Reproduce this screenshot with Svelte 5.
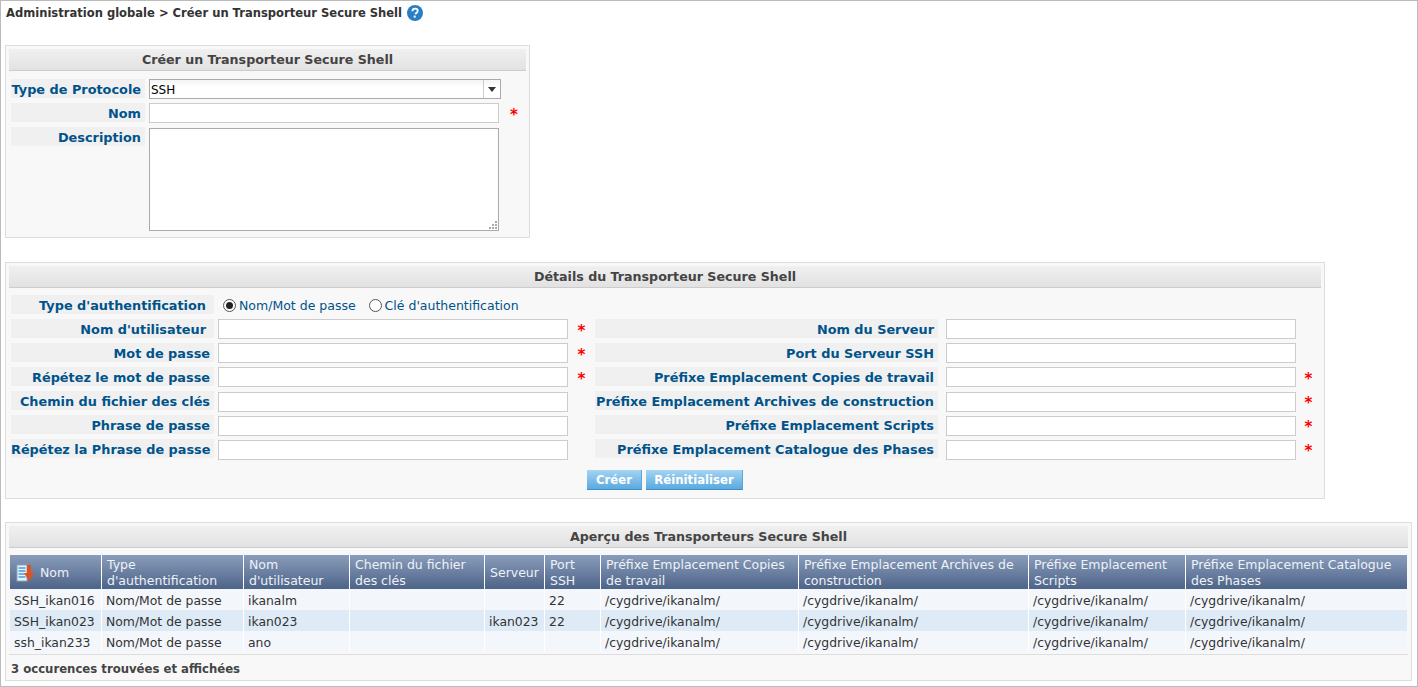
<script lang="ts">
	const left_rows = [
		{ label: "Nom d'utilisateur", required: true },
		{ label: 'Mot de passe', required: true },
		{ label: 'Répétez le mot de passe', required: true },
		{ label: 'Chemin du fichier des clés', required: false },
		{ label: 'Phrase de passe', required: false },
		{ label: 'Répétez la Phrase de passe', required: false },
	];
	const right_rows = [
		{ label: 'Nom du Serveur', required: false },
		{ label: 'Port du Serveur SSH', required: false },
		{ label: 'Préfixe Emplacement Copies de travail', required: true },
		{ label: 'Préfixe Emplacement Archives de construction', required: true },
		{ label: 'Préfixe Emplacement Scripts', required: true },
		{ label: 'Préfixe Emplacement Catalogue des Phases', required: true },
	];
	const columns = [
		{ title: 'Nom', width: 92 },
		{ title: "Type d'authentification", width: 142 },
		{ title: "Nom d'utilisateur", width: 106 },
		{ title: 'Chemin du fichier des clés', width: 135 },
		{ title: 'Serveur', width: 60 },
		{ title: 'Port SSH', width: 56 },
		{ title: 'Préfixe Emplacement Copies de travail', width: 198 },
		{ title: 'Préfixe Emplacement Archives de construction', width: 230 },
		{ title: 'Préfixe Emplacement Scripts', width: 157 },
		{ title: 'Préfixe Emplacement Catalogue des Phases', width: 221 },
	];
	const path = '/cygdrive/ikanalm/';
	const rows = [
		['SSH_ikan016', 'Nom/Mot de passe', 'ikanalm', '', '', '22', path, path, path, path],
		['SSH_ikan023', 'Nom/Mot de passe', 'ikan023', '', 'ikan023', '22', path, path, path, path],
		['ssh_ikan233', 'Nom/Mot de passe', 'ano', '', '', '', path, path, path, path],
	];
</script>

<div class="page">
	<div class="crumb">
		<span>Administration globale &gt; Créer un Transporteur Secure Shell</span>
		<svg class="help" viewBox="0 0 16 16" width="16" height="16">
			<circle cx="8" cy="8" r="8" fill="#2a7fc4" />
			<path d="M5.4 6.2C5.5 4.600 6.600 3.600 8.100 3.600c1.500 0 2.600.9 2.600 2.200 0 1-.5 1.500-1.300 2.100-.6.4-.8.7-.8 1.400" fill="none" stroke="#fff" stroke-width="1.9" />
			<rect x="6.700" y="10.600" width="2" height="2" fill="#fff" />
		</svg>
	</div>

	<section class="panel first">
		<h2>Créer un Transporteur Secure Shell</h2>
		<div class="form-small">
			<div class="label">Type de Protocole</div>
			<div class="select"><span>SSH</span><i><b></b></i></div>
			<div></div>
			<div class="label">Nom</div>
			<div class="input"></div>
			<div class="star">*</div>
			<div class="label">Description</div>
			<div class="textarea">
				<svg class="grip" viewBox="0 0 9 9" width="9" height="9">
					<path d="M7 1h2v2H7zM4 4h2v2H4zM7 4h2v2H7zM1 7h2v2H1zM4 7h2v2H4zM7 7h2v2H7z" fill="#a9a9a9" />
				</svg>
			</div>
			<div></div>
		</div>
	</section>

	<section class="panel second">
		<h2>Détails du Transporteur Secure Shell</h2>
		<div class="auth-row">
			<div class="label">Type d'authentification</div>
			<label class="radio"><span class="dot on"></span>Nom/Mot de passe</label>
			<label class="radio"><span class="dot"></span>Clé d'authentification</label>
		</div>
		<div class="form-big">
			{#each left_rows as row, i}
				<div class="label" class:indent={i === 0}>{row.label}</div>
				<div class="input left" class:low={i > 2}></div>
				<div class="star">{row.required ? '*' : ''}</div>
				<div class="label">{right_rows[i].label}</div>
				<div class="input right" class:low={i > 2}></div>
				<div class="star">{right_rows[i].required ? '*' : ''}</div>
			{/each}
		</div>
		<div class="buttons">
			<button type="button" class="create">Créer</button>
			<button type="button" class="reset">Réinitialiser</button>
		</div>
	</section>

	<section class="panel third">
		<h2>Aperçu des Transporteurs Secure Shell</h2>
		<table>
			<colgroup>
				{#each columns as col}
					<col style="width: {col.width}px" />
				{/each}
			</colgroup>
			<thead>
				<tr>
					{#each columns as col, i}
						<th>
							{#if i === 0}
								<svg class="sort" viewBox="0 0 18 18" width="18" height="18">
									<rect x="1" y="1" width="10" height="16" fill="#eaf3fb" stroke="#8aa3bd" />
									<path d="M2.500 4h7M2.500 7h7M2.500 10h7M2.500 13h7" stroke="#4a9be0" stroke-width="1.300" />
									<path d="M11 1h4v8h3l-5 8-5-8h3z" fill="#e0521b" />
								</svg>
								<span class="first-title">{col.title}</span>
							{:else}
								{col.title}
							{/if}
						</th>
					{/each}
				</tr>
			</thead>
			<tbody>
				{#each rows as row, r}
					<tr class:even={r === 1}>
						{#each row as cell}
							<td>{cell}</td>
						{/each}
					</tr>
				{/each}
			</tbody>
		</table>
		<div class="count">3 occurences trouvées et affichées</div>
	</section>
</div>

<style>
	:global(body) {
		margin: 0;
		background: #fff;
	}
	.page {
		box-sizing: border-box;
		width: 1418px;
		height: 687px;
		border: 1px solid #bbb;
		padding: 4px 4px 0;
		font-family: 'DejaVu Sans', Verdana, sans-serif;
		font-size: 12px;
		color: #333;
		overflow: hidden;
	}
	.crumb {
		display: flex;
		align-items: center;
		gap: 5px;
		height: 16px;
		padding-left: 1px;
		font-size: 11.55px;
		font-weight: bold;
		color: #333;
	}
	.help {
		display: block;
	}
	.panel {
		box-sizing: border-box;
		background: #f8f8f8;
		border: 1px solid #ddd;
		padding: 3px;
	}
	.first {
		width: 525px;
		height: 193px;
		margin-top: 24px;
	}
	.second {
		width: 1320px;
		height: 237px;
		margin-top: 24px;
	}
	.third {
		width: 1407px;
		height: 159px;
		margin-top: 23px;
	}
	h2 {
		margin: 0;
		height: 22px;
		line-height: 21px;
		font-size: 12.65px;
		font-weight: bold;
		text-align: center;
		color: #444;
		background: linear-gradient(#f0f0f0, #e2e2e2);
		border-bottom: 1px solid #ccc;
		box-sizing: border-box;
	}
	.label {
		box-sizing: border-box;
		height: 19px;
		line-height: 21px;
		padding-right: 4px;
		background: #f0f0f0;
		color: #00538a;
		font-weight: bold;
		font-size: 12.85px;
		text-align: right;
		white-space: nowrap;
	}
	.input {
		box-sizing: border-box;
		height: 20px;
		width: 350px;
		background: #fff;
		border: 1px solid #ccc;
	}
	.star {
		height: 20px;
		color: #f00;
		font-weight: bold;
		font-size: 15px;
		line-height: 24px;
		text-align: center;
	}
	.form-small {
		display: grid;
		grid-template-columns: 134px 352px 18px;
		column-gap: 4px;
		row-gap: 4px;
		padding: 8px 0 0 2px;
		align-items: start;
	}
	.select {
		box-sizing: border-box;
		display: flex;
		justify-content: space-between;
		height: 20px;
		width: 352px;
		background: linear-gradient(#f4f4f4, #fff 40%);
		border: 1px solid #a9a9b0;
		color: #000;
		font-size: 12px;
		line-height: 20px;
		padding-left: 1px;
	}
	.select i {
		display: flex;
		align-items: center;
		justify-content: center;
		width: 16px;
		border-left: 1px solid #ccc;
	}
	.select b {
		border: 4px solid transparent;
		border-top: 5px solid #333;
		border-bottom: 0;
	}
	.textarea {
		box-sizing: border-box;
		position: relative;
		width: 350px;
		height: 103px;
		margin-top: 1px;
		background: #fff;
		border: 1px solid #a9a9b0;
	}
	.grip {
		position: absolute;
		right: 1px;
		bottom: 1px;
	}
	.auth-row {
		display: flex;
		align-items: flex-start;
		padding: 7px 0 0 2px;
		height: 19px;
	}
	.auth-row .label {
		width: 203px;
		padding-right: 8px;
		margin-right: 9px;
	}
	.radio {
		display: flex;
		align-items: center;
		gap: 3px;
		height: 21px;
		margin-right: 13px;
		color: #00538a;
		font-size: 12.5px;
	}
	.dot {
		box-sizing: border-box;
		width: 13px;
		height: 13px;
		border-radius: 50%;
		border: 1px solid #555;
		background: #fff;
		display: flex;
		align-items: center;
		justify-content: center;
	}
	.dot.on::after {
		content: '';
		width: 7px;
		height: 7px;
		border-radius: 50%;
		background: #222;
	}
	.form-big {
		display: grid;
		grid-template-columns: 203px 354px 27px 343px 358px 25px;
		grid-auto-rows: 20px;
		row-gap: 4px;
		padding: 5px 0 0 2px;
		align-items: start;
	}
	.input.left {
		margin-left: 4px;
	}
	.input.right {
		margin-left: 8px;
	}
	.input.low {
		margin-top: 1px;
	}
	.indent {
		padding-right: 8px;
	}
	.buttons {
		display: flex;
		justify-content: center;
		gap: 4px;
		margin-top: 11px;
	}
	button {
		box-sizing: border-box;
		height: 20px;
		padding: 0;
		border: 0;
		border-bottom: 1px solid #3a8fc8;
		border-right: 1px solid #5aa5d8;
		background: linear-gradient(#a5d3f2, #5aaadf);
		color: #fff;
		font-family: inherit;
		font-size: 11.7px;
		font-weight: bold;
		line-height: 18px;
	}
	.create {
		width: 55px;
	}
	.reset {
		width: 97px;
	}
	table {
		width: 1397px;
		margin: 7px 0 0 1px;
		border-collapse: separate;
		border-spacing: 0;
		table-layout: fixed;
		font-size: 12.4px;
	}
	th {
		box-sizing: border-box;
		height: 34px;
		padding: 2px 5px 0;
		background: linear-gradient(#8a9cbb, #4d6488);
		border-right: 1px solid #fff;
		color: #eef2f7;
		font-weight: normal;
		font-size: 12.5px;
		text-align: left;
		line-height: 16px;
		vertical-align: middle;
	}
	th:first-child {
		white-space: nowrap;
	}
	th:last-child,
	td:last-child {
		border-right: 0;
	}
	.sort {
		vertical-align: middle;
		margin: 0 2px 0 1px;
	}
	.first-title {
		vertical-align: middle;
	}
	td {
		box-sizing: border-box;
		height: 21px;
		padding: 2px 4px 0;
		background: #f3f7fb;
		border-right: 1px solid #fff;
		color: #333;
		white-space: nowrap;
		overflow: hidden;
	}
	tr.even td {
		background: #deebf6;
	}
	.count {
		margin-top: 2px;
		padding: 7px 2px 0;
		border-top: 1px solid #ddd;
		font-size: 11.7px;
		font-weight: bold;
		color: #444;
	}
</style>
